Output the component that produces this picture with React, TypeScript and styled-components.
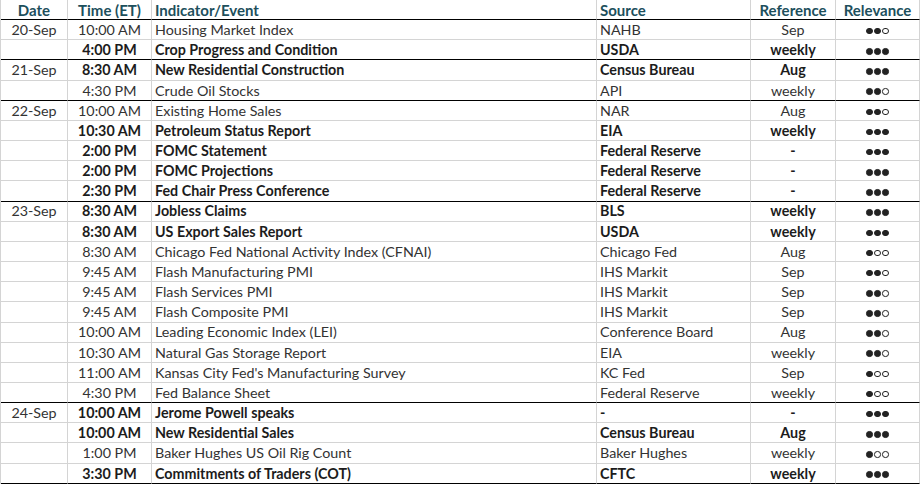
import React from "react";
import styled, { createGlobalStyle, css } from "styled-components";

const GlobalStyle = createGlobalStyle`
  html, body { margin: 0; padding: 0; background: #ffffff; }
  body { font-family: Lato, "Liberation Sans", Arial, sans-serif; }
  * { box-sizing: border-box; }
`;

const ROW_H = 20.17;

const Table = styled.div`
  display: grid;
  grid-template-columns: 67px 84px 445px 154px 85px 84px;
  width: 920px;
  border-left: 1px solid #d4d4d4;
  font-size: 14.3px;
  color: #333333;
`;

type Align = "left" | "center";

const Cell = styled.div<{ $align?: Align; $bold?: boolean; $end?: boolean }>`
  height: ${ROW_H}px;
  display: flex;
  align-items: center;
  justify-content: ${(p) => (p.$align === "left" ? "flex-start" : "center")};
  padding: 1px ${(p) => (p.$align === "left" ? "3px" : "0")} 0;
  border-right: 1px solid #d4d4d4;
  border-bottom: 1px solid ${(p) => (p.$end ? "#000000" : "#d4d4d4")};
  white-space: nowrap;
  overflow: hidden;
  line-height: 1;
  ${(p) =>
    p.$bold &&
    css`
      font-weight: 700;
      color: #1c1c1c;
    `}
`;

const HeadCell = styled(Cell)`
  font-size: 15px;
  font-weight: 700;
  color: #1d4f5c;
  border-bottom-color: #000000;
`;

const Dots = styled.span`
  display: inline-flex;
  align-items: center;
  gap: 1.5px;
  margin-top: 2px;
`;

const Dot = styled.span<{ $filled: boolean }>`
  width: 6.5px;
  height: 6.5px;
  border-radius: 50%;
  background: ${(p) => (p.$filled ? "#222222" : "#ffffff")};
  border: 1px solid #222222;
`;

type Row = {
  date?: string;
  time: string;
  event: string;
  source: string;
  ref: string;
  rel: number;
  bold?: boolean;
  end?: boolean;
};

const rows: Row[] = [
  { date: "20-Sep", time: "10:00 AM", event: "Housing Market Index", source: "NAHB", ref: "Sep", rel: 2 },
  { time: "4:00 PM", event: "Crop Progress and Condition", source: "USDA", ref: "weekly", rel: 3, bold: true, end: true },
  { date: "21-Sep", time: "8:30 AM", event: "New Residential Construction", source: "Census Bureau", ref: "Aug", rel: 3, bold: true },
  { time: "4:30 PM", event: "Crude Oil Stocks", source: "API", ref: "weekly", rel: 2, end: true },
  { date: "22-Sep", time: "10:00 AM", event: "Existing Home Sales", source: "NAR", ref: "Aug", rel: 2 },
  { time: "10:30 AM", event: "Petroleum Status Report", source: "EIA", ref: "weekly", rel: 3, bold: true },
  { time: "2:00 PM", event: "FOMC Statement", source: "Federal Reserve", ref: "-", rel: 3, bold: true },
  { time: "2:00 PM", event: "FOMC Projections", source: "Federal Reserve", ref: "-", rel: 3, bold: true },
  { time: "2:30 PM", event: "Fed Chair Press Conference", source: "Federal Reserve", ref: "-", rel: 3, bold: true, end: true },
  { date: "23-Sep", time: "8:30 AM", event: "Jobless Claims", source: "BLS", ref: "weekly", rel: 3, bold: true },
  { time: "8:30 AM", event: "US Export Sales Report", source: "USDA", ref: "weekly", rel: 3, bold: true },
  { time: "8:30 AM", event: "Chicago Fed National Activity Index (CFNAI)", source: "Chicago Fed", ref: "Aug", rel: 1 },
  { time: "9:45 AM", event: "Flash Manufacturing PMI", source: "IHS Markit", ref: "Sep", rel: 2 },
  { time: "9:45 AM", event: "Flash Services PMI", source: "IHS Markit", ref: "Sep", rel: 2 },
  { time: "9:45 AM", event: "Flash Composite PMI", source: "IHS Markit", ref: "Sep", rel: 2 },
  { time: "10:00 AM", event: "Leading Economic Index (LEI)", source: "Conference Board", ref: "Aug", rel: 2 },
  { time: "10:30 AM", event: "Natural Gas Storage Report", source: "EIA", ref: "weekly", rel: 2 },
  { time: "11:00 AM", event: "Kansas City Fed's Manufacturing Survey", source: "KC Fed", ref: "Sep", rel: 1 },
  { time: "4:30 PM", event: "Fed Balance Sheet", source: "Federal Reserve", ref: "weekly", rel: 1, end: true },
  { date: "24-Sep", time: "10:00 AM", event: "Jerome Powell speaks", source: "-", ref: "-", rel: 3, bold: true },
  { time: "10:00 AM", event: "New Residential Sales", source: "Census Bureau", ref: "Aug", rel: 3, bold: true },
  { time: "1:00 PM", event: "Baker Hughes US Oil Rig Count", source: "Baker Hughes", ref: "weekly", rel: 1 },
  { time: "3:30 PM", event: "Commitments of Traders (COT)", source: "CFTC", ref: "weekly", rel: 3, bold: true, end: true },
];

const Relevance: React.FC<{ level: number }> = ({ level }) => (
  <Dots>
    {[0, 1, 2].map((i) => (
      <Dot key={i} $filled={i < level} />
    ))}
  </Dots>
);

export default function App() {
  return (
    <>
      <GlobalStyle />
      <Table>
        <HeadCell>Date</HeadCell>
        <HeadCell>Time (ET)</HeadCell>
        <HeadCell $align="left">Indicator/Event</HeadCell>
        <HeadCell $align="left">Source</HeadCell>
        <HeadCell>Reference</HeadCell>
        <HeadCell>Relevance</HeadCell>
        {rows.map((r, i) => (
          <React.Fragment key={i}>
            <Cell $end={r.end}>{r.date ?? ""}</Cell>
            <Cell $end={r.end} $bold={r.bold}>{r.time}</Cell>
            <Cell $end={r.end} $bold={r.bold} $align="left">{r.event}</Cell>
            <Cell $end={r.end} $bold={r.bold} $align="left">{r.source}</Cell>
            <Cell $end={r.end} $bold={r.bold}>{r.ref}</Cell>
            <Cell $end={r.end}>
              <Relevance level={r.rel} />
            </Cell>
          </React.Fragment>
        ))}
      </Table>
    </>
  );
}
